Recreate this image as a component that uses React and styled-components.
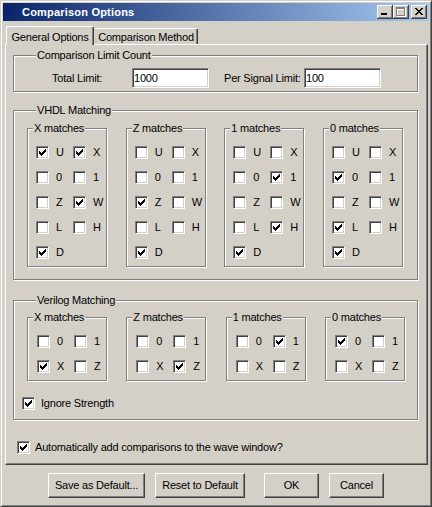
import React, { useState } from 'react';
import styled, { createGlobalStyle } from 'styled-components';

const Global = createGlobalStyle`
  html, body { margin: 0; padding: 0; background: #d4d0c8; }
  body { font-family: "Liberation Sans", Arial, sans-serif; font-size: 11px; letter-spacing: -0.2px; color: #000; }
  * { box-sizing: border-box; }
`;

const Window = styled.div`
  width: 432px;
  height: 507px;
  background: #d4d0c8;
  border-top: 1px solid #d4d0c8;
  border-left: 1px solid #d4d0c8;
  border-right: 1px solid #404040;
  border-bottom: 1px solid #404040;
  box-shadow: inset 1px 1px #fff, inset -1px -1px #808080;
  padding: 2px;
  display: flex;
  flex-direction: column;
`;

const TitleBar = styled.div`
  height: 18px;
  flex: none;
  display: flex;
  align-items: center;
  padding: 0 2px 0 19px;
  background: linear-gradient(to right, #0a246a, #a6caf0);
`;

const Title = styled.div`
  flex: 1;
  color: #fff;
  font-weight: bold;
  font-size: 11px;
  letter-spacing: 0.2px;
  line-height: 13px;
`;

const CapButton = styled.button`
  width: 16px;
  height: 14px;
  padding: 0;
  margin: 0 0 0 ${p => p.$gap || 0}px;
  border: none;
  background: #d4d0c8;
  box-shadow: inset -1px -1px #404040, inset 1px 1px #fff, inset -2px -2px #808080;
  position: relative;
  display: block;
  svg { position: absolute; left: ${p => p.$gx}px; top: ${p => p.$gy}px; display: block; }
`;

const TabRow = styled.div`
  height: 23px;
  flex: none;
  display: flex;
  align-items: flex-end;
  padding-left: 3px;
`;

const Tab = styled.div`
  position: relative;
  z-index: ${p => (p.$active ? 1 : 0)};
  width: ${p => p.$w}px;
  height: ${p => (p.$active ? 19 : 16)}px;
  margin-bottom: ${p => (p.$active ? -1 : 0)}px;
  background: #d4d0c8;
  border-top: 1px solid #fff;
  border-left: ${p => (p.$active ? '1px solid #fff' : 'none')};
  border-right: 1px solid #404040;
  border-radius: 2px 2px 0 0;
  box-shadow: inset -1px 0 #808080;
  text-align: center;
  line-height: 13px;
  padding-top: ${p => (p.$active ? 4 : 2)}px;
  padding-left: ${p => (p.$active ? 0 : 1)}px;
`;

const Panel = styled.div`
  flex: none;
  height: 421px;
  margin: 0 1px 0 2px;
  border-top: 1px solid #fff;
  border-left: 1px solid #fff;
  border-right: 1px solid #404040;
  border-bottom: 1px solid #404040;
  box-shadow: inset -1px -1px #808080;
  padding: 10px 9px 0 7px;
  display: flex;
  flex-direction: column;
`;

const Group = styled.div`
  position: relative;
  flex: none;
  width: ${p => (p.$w ? `${p.$w}px` : 'auto')};
  height: ${p => p.$h}px;
  margin-top: ${p => p.$mt || 0}px;
  border: 1px solid #808080;
  box-shadow: inset 1px 1px #fff, 1px 1px #fff;
  padding: ${p => p.$pad};
`;

const Legend = styled.div`
  position: absolute;
  top: -7px;
  left: ${p => p.$left}px;
  padding: 0 1px;
  line-height: 13px;
  background: #d4d0c8;
  white-space: nowrap;
`;

const LimitRow = styled.div`
  display: flex;
  align-items: center;
  height: 20px;
`;

const FieldLabel = styled.label`
  width: 80px;
  margin-left: ${p => p.$ml}px;
  line-height: 13px;
  white-space: nowrap;
`;

const Field = styled.input`
  width: 77px;
  height: 20px;
  margin: 0;
  padding: 0 0 0 1px;
  font: inherit;
  letter-spacing: inherit;
  color: #000;
  background: #fff;
  border-top: 1px solid #808080;
  border-left: 1px solid #808080;
  border-right: 1px solid #fff;
  border-bottom: 1px solid #fff;
  box-shadow: inset 1px 1px #404040, inset -1px -1px #d4d0c8;
  outline: none;
`;

const SubRow = styled.div`
  display: flex;
  justify-content: space-between;
  padding-right: ${p => p.$pr}px;
`;

const SubGrid = styled.div`
  display: grid;
  grid-template-columns: 37px auto;
  row-gap: 12px;
`;

const CheckRow = styled.label`
  display: flex;
  align-items: center;
  gap: ${p => p.$gap || 6}px;
  height: 13px;
  line-height: 13px;
  white-space: nowrap;
  margin-top: ${p => p.$mt || 0}px;
  margin-left: ${p => p.$ml || 0}px;
`;

const Box = styled.span`
  position: relative;
  flex: none;
  width: 13px;
  height: 13px;
  background: #fff;
  border-top: 1px solid #808080;
  border-left: 1px solid #808080;
  border-right: 1px solid #fff;
  border-bottom: 1px solid #fff;
  box-shadow: inset 1px 1px #404040, inset -1px -1px #d4d0c8;
  svg { position: absolute; left: 2px; top: 2px; display: block; }
`;

const ButtonRow = styled.div`
  display: flex;
  margin-top: 8px;
  padding-left: 45px;
`;

const PushButton = styled.button`
  width: ${p => p.$w}px;
  height: 25px;
  margin: 0 0 0 ${p => p.$ml || 0}px;
  padding: 0;
  font: inherit;
  letter-spacing: inherit;
  color: #000;
  background: #d4d0c8;
  border-top: 1px solid #fff;
  border-left: 1px solid #fff;
  border-right: 1px solid #404040;
  border-bottom: 1px solid #404040;
  box-shadow: inset -1px -1px #808080;
  line-height: 13px;
`;

const Pix = ({ d, w, h, color = '#000' }) => (
  <svg width={w} height={h} viewBox={`0 0 ${w} ${h}`} shapeRendering="crispEdges">
    <path d={d} fill={color} />
  </svg>
);

const CHECK = 'M6 0h1v1H6z M5 1h2v1H5z M0 2h1v1H0z M4 2h3v1H4z M0 3h2v1H0z M3 3h3v1H3z M0 4h5v1H0z M1 5h3v1H1z M2 6h1v1H2z';
const CLOSE = 'M0 0h2v1H0z M6 0h2v1H6z M1 1h2v1H1z M5 1h2v1H5z M2 2h4v1H2z M3 3h2v1H3z M2 4h4v1H2z M1 5h2v1H1z M5 5h2v1H5z M0 6h2v1H0z M6 6h2v1H6z';
const MAX = 'M0 0h9v2H0z M0 2h1v6H0z M8 2h1v6H8z M0 8h9v1H0z';

const Check = ({ label, checked, onToggle, gap, mt, ml }) => (
  <CheckRow $gap={gap} $mt={mt} $ml={ml} onClick={onToggle}>
    <Box>{checked && <Pix d={CHECK} w={7} h={7} />}</Box>
    <span>{label}</span>
  </CheckRow>
);

const vhdlInit = [
  { title: 'X matches', items: [['U', 1], ['X', 1], ['0', 0], ['1', 0], ['Z', 0], ['W', 1], ['L', 0], ['H', 0], ['D', 1]] },
  { title: 'Z matches', items: [['U', 0], ['X', 0], ['0', 0], ['1', 0], ['Z', 1], ['W', 0], ['L', 0], ['H', 0], ['D', 1]] },
  { title: '1 matches', items: [['U', 0], ['X', 0], ['0', 0], ['1', 1], ['Z', 0], ['W', 0], ['L', 0], ['H', 1], ['D', 1]] },
  { title: '0 matches', items: [['U', 0], ['X', 0], ['0', 1], ['1', 0], ['Z', 0], ['W', 0], ['L', 1], ['H', 0], ['D', 1]] },
];

const verilogInit = [
  { title: 'X matches', items: [['0', 0], ['1', 0], ['X', 1], ['Z', 0]] },
  { title: 'Z matches', items: [['0', 0], ['1', 0], ['X', 0], ['Z', 1]] },
  { title: '1 matches', items: [['0', 0], ['1', 1], ['X', 0], ['Z', 0]] },
  { title: '0 matches', items: [['0', 1], ['1', 0], ['X', 0], ['Z', 0]] },
];

const MatchGroups = ({ groups, setGroups, height, padLeft }) => (
  <>
    {groups.map((g, gi) => (
      <Group key={g.title} $w={80} $h={height} $pad={`17px 0 0 ${padLeft}px`}>
        <Legend $left={5}>{g.title}</Legend>
        <SubGrid>
          {g.items.map(([lab, on], ii) => (
            <Check
              key={lab}
              label={lab}
              gap={7}
              checked={!!on}
              onToggle={() =>
                setGroups(prev =>
                  prev.map((pg, pgi) =>
                    pgi !== gi ? pg : { ...pg, items: pg.items.map((it, iti) => (iti === ii ? [it[0], it[1] ? 0 : 1] : it)) }
                  )
                )
              }
            />
          ))}
        </SubGrid>
      </Group>
    ))}
  </>
);

export default function App() {
  const [vhdl, setVhdl] = useState(vhdlInit);
  const [verilog, setVerilog] = useState(verilogInit);
  const [ignore, setIgnore] = useState(true);
  const [auto, setAuto] = useState(true);

  return (
    <>
      <Global />
      <Window>
        <TitleBar>
          <Title>Comparison Options</Title>
          <CapButton $gx={4} $gy={8} aria-label="Minimize">
            <Pix d="M0 0h6v2H0z" w={6} h={2} />
          </CapButton>
          <CapButton $gx={3} $gy={2} aria-label="Maximize">
            <svg width={10} height={10} viewBox="0 0 10 10" shapeRendering="crispEdges">
              <path d={MAX} fill="#fff" transform="translate(1 1)" />
              <path d={MAX} fill="#808080" />
            </svg>
          </CapButton>
          <CapButton $gap={2} $gx={4} $gy={3} aria-label="Close">
            <Pix d={CLOSE} w={8} h={7} />
          </CapButton>
        </TitleBar>

        <TabRow>
          <Tab $active $w={88}>General Options</Tab>
          <Tab $w={104}>Comparison Method</Tab>
        </TabRow>

        <Panel>
          <Group $h={37} $pad="12px 0 0 38px">
            <Legend $left={22}>Comparison Limit Count</Legend>
            <LimitRow>
              <FieldLabel $ml={0}>Total Limit:</FieldLabel>
              <Field defaultValue="1000" />
              <FieldLabel $ml={15}>Per Signal Limit:</FieldLabel>
              <Field defaultValue="100" />
            </LimitRow>
          </Group>

          <Group $h={170} $mt={18} $pad="17px 0 0 13px">
            <Legend $left={22}>VHDL Matching</Legend>
            <SubRow $pr={14}>
              <MatchGroups groups={vhdl} setGroups={setVhdl} height={139} padLeft={8} />
            </SubRow>
          </Group>

          <Group $h={120} $mt={20} $pad="16px 0 0 13px">
            <Legend $left={22}>Verilog Matching</Legend>
            <SubRow $pr={12}>
              <MatchGroups groups={verilog} setGroups={setVerilog} height={64} padLeft={9} />
            </SubRow>
            <Check label="Ignore Strength" gap={6} checked={ignore} onToggle={() => setIgnore(v => !v)} mt={16} ml={-5} />
          </Group>

          <Check
            label="Automatically add comparisons to the wave window?"
            gap={5}
            checked={auto}
            onToggle={() => setAuto(v => !v)}
            mt={21}
            ml={4}
          />
        </Panel>

        <ButtonRow>
          <PushButton $w={97}>Save as Default...</PushButton>
          <PushButton $w={90} $ml={10}>Reset to Default</PushButton>
          <PushButton $w={55} $ml={19}>OK</PushButton>
          <PushButton $w={55} $ml={10}>Cancel</PushButton>
        </ButtonRow>
      </Window>
    </>
  );
}
